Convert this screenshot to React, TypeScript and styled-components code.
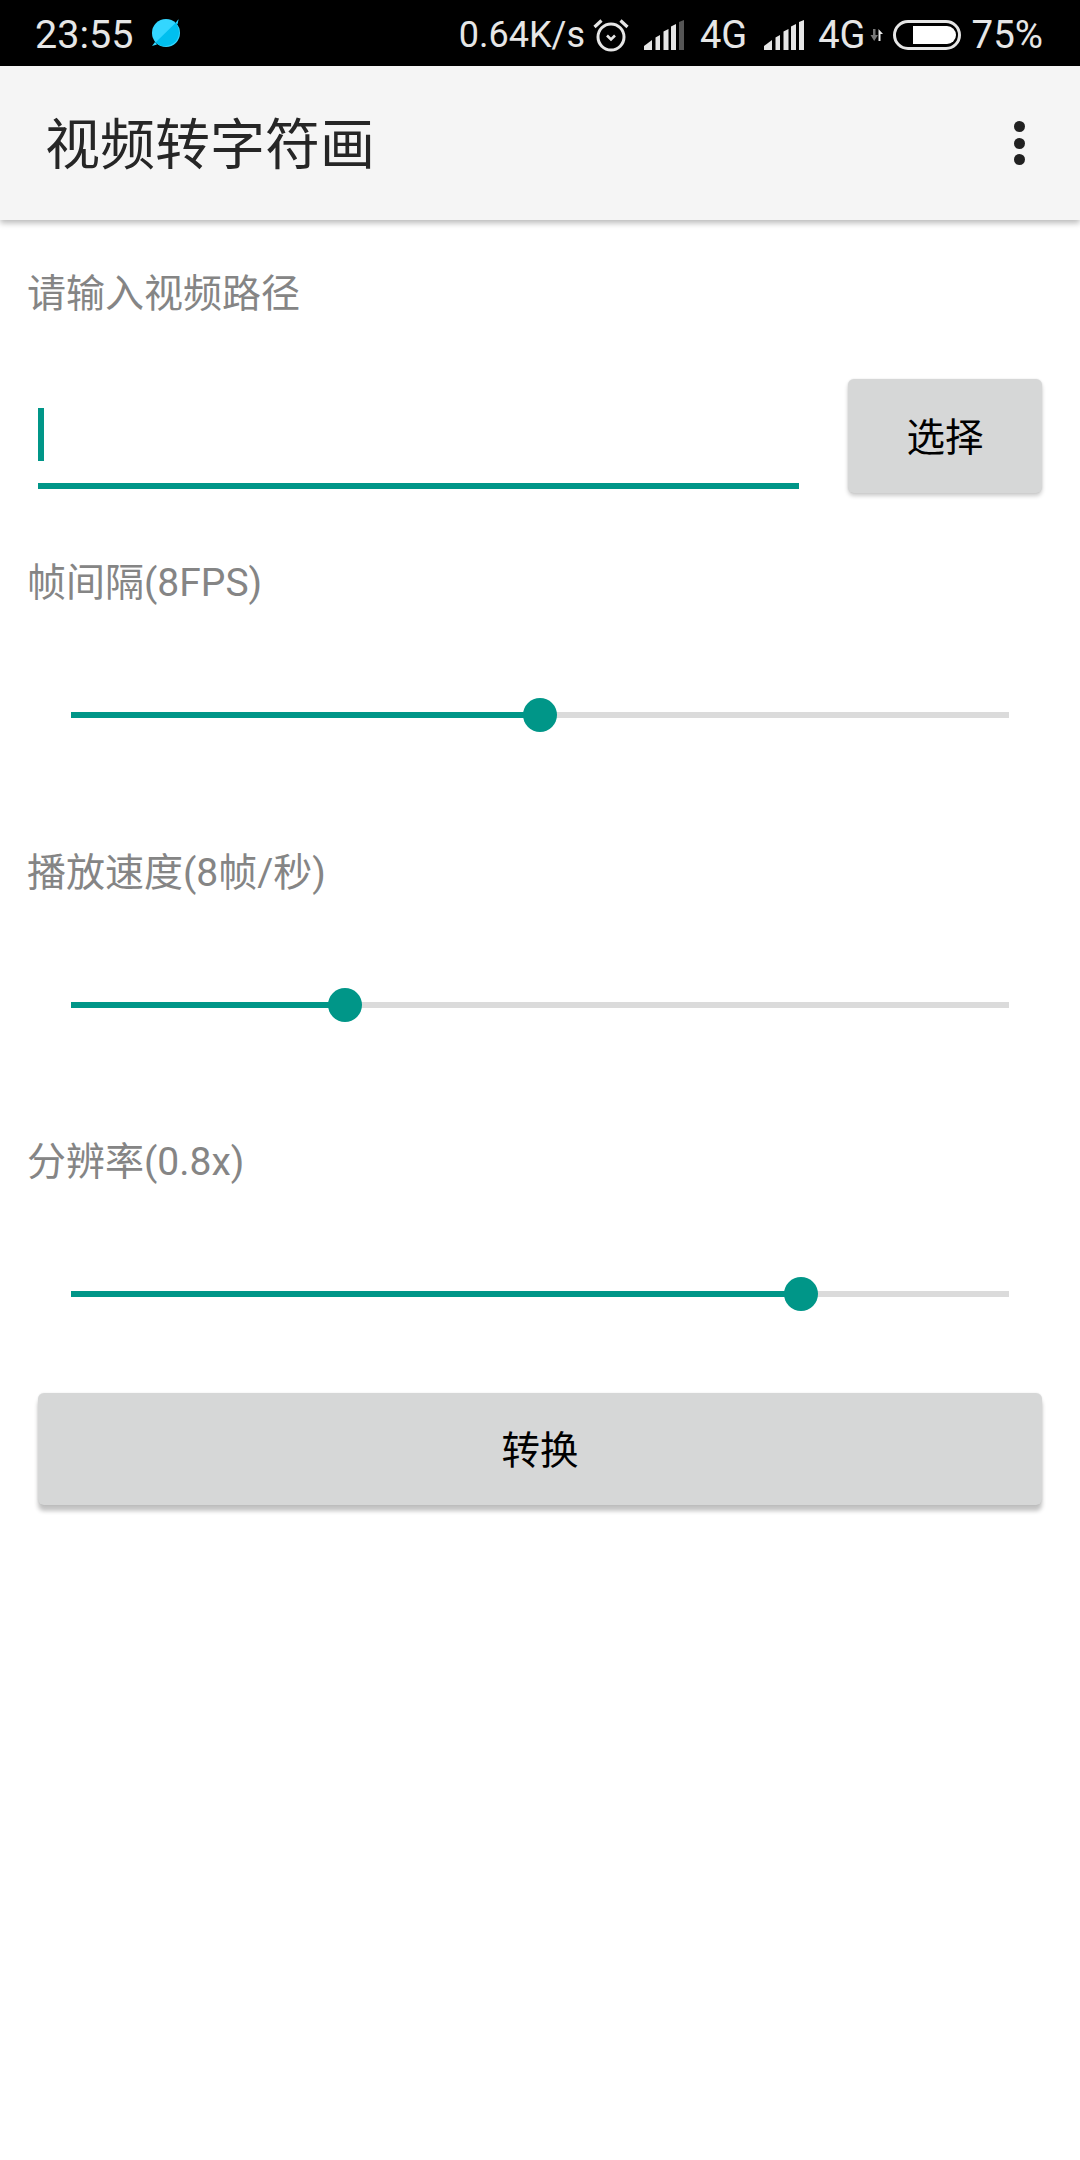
import React from 'react';
import styled, { createGlobalStyle } from 'styled-components';

const GlobalStyle = createGlobalStyle`
  html, body {
    margin: 0;
    padding: 0;
    background: #ffffff;
  }
  * {
    box-sizing: border-box;
  }
  body {
    font-family: Roboto, "Noto Sans CJK SC", sans-serif;
  }
`;

const Page = styled.div`
  width: 1080px;
  height: 2160px;
  background: #ffffff;
  overflow: hidden;
`;

const StatusBar = styled.div`
  height: 66px;
  background: #000000;
  color: #e6e6e6;
  display: flex;
  align-items: center;
  padding: 3px 37px 0 35px;
`;

const StatusText = styled.span<{ $size?: number; $left?: number }>`
  font-size: ${p => p.$size ?? 38}px;
  line-height: 44px;
  margin-left: ${p => p.$left ?? 0}px;
  white-space: nowrap;
`;

const StatusIcon = styled.svg<{ $left: number }>`
  display: block;
  flex: none;
  margin-left: ${p => p.$left}px;
`;

const AppIcon = styled.svg`
  display: block;
  flex: none;
  margin: -3px 0 0 18px;
`;

const StatusRight = styled.div`
  margin-left: auto;
  display: flex;
  align-items: center;
`;

const AppBar = styled.header`
  position: relative;
  height: 154px;
  background: #f5f5f5;
  display: flex;
  align-items: center;
  justify-content: space-between;
  padding: 0 55px 0 45px;
  box-shadow: 0 3px 6px rgba(0, 0, 0, 0.28);
`;

const Title = styled.h1`
  margin: 4px 0 0;
  font-size: 55px;
  font-weight: 400;
  line-height: 64px;
  color: #262626;
`;

const MoreMenu = styled.div`
  display: flex;
  flex-direction: column;
  gap: 5.5px;
`;

const MenuDot = styled.span`
  width: 11px;
  height: 11px;
  border-radius: 50%;
  background: #212121;
`;

const Content = styled.main`
  padding-top: 48px;
`;

const Label = styled.div`
  padding-left: 27px;
  font-size: 39px;
  line-height: 52px;
  color: #858585;
`;

const PathRow = styled.div`
  display: flex;
  align-items: flex-start;
  gap: 49px;
  margin: 59px 38px 64px;
`;

const PathField = styled.div`
  flex: 1;
  height: 110px;
  padding-top: 29px;
  border-bottom: 6px solid #009688;
`;

const Caret = styled.div`
  width: 6px;
  height: 53px;
  background: #009688;
`;

const RaisedButton = styled.button`
  border: 0;
  padding: 0 0 4px;
  border-radius: 6px;
  background: #d6d7d7;
  color: #000000;
  font-family: inherit;
  font-size: 38.5px;
  box-shadow: 0 3px 4px rgba(0, 0, 0, 0.2), 0 0 2px rgba(0, 0, 0, 0.1);
`;

const PickButton = styled(RaisedButton)`
  width: 194px;
  height: 114px;
`;

const ConvertButton = styled(RaisedButton)`
  display: block;
  width: 1004px;
  height: 112px;
  margin: 82px 38px 0;
  box-shadow: 0 6px 4px rgba(0, 0, 0, 0.24), 0 0 2px rgba(0, 0, 0, 0.1);
`;

const SliderSection = styled.section`
  margin-bottom: 114.7px;

  &:last-of-type {
    margin-bottom: 0;
  }
`;

const SliderBox = styled.div`
  position: relative;
  height: 34px;
  margin: 89px 71px 0;
  display: flex;
  align-items: center;
`;

const TrackFilled = styled.div`
  height: 6px;
  background: #009688;
`;

const TrackRest = styled.div`
  flex: 1;
  height: 6px;
  background: #dbdbdb;
`;

const Thumb = styled.div`
  position: absolute;
  top: 0;
  width: 34px;
  height: 34px;
  margin-left: -17px;
  border-radius: 50%;
  background: #009688;
`;

const Slider = ({ ratio }: { ratio: number }) => (
  <SliderBox>
    <TrackFilled style={{ width: `${ratio * 100}%` }} />
    <TrackRest />
    <Thumb style={{ left: `${ratio * 100}%` }} />
  </SliderBox>
);

const BUBBLE_ICON = (
  <AppIcon width="30" height="30" viewBox="0 0 30 30">
    <circle cx="15" cy="15" r="14" fill="#33d6ff" />
    <path d="M26 3.5 L27.5 2 L26 7 A14 14 0 0 1 4.5 24.5 Z" fill="#00bfef" />
    <path d="M25 4.5 L27.5 1 L26.5 6 Z" fill="#33d6ff" />
    <path d="M4 24 L1 28 L6 26.5 Z" fill="#33d6ff" />
  </AppIcon>
);

const AlarmIcon = () => (
  <StatusIcon $left={8} width="36" height="35" viewBox="0 0 36 35" fill="none" stroke="#e6e6e6">
    <circle cx="18" cy="20" r="13" strokeWidth="3" />
    <path d="M14 18.5 L18 22.5 L22 18.5" strokeWidth="2.6" />
    <path d="M1.5 10 L8.5 3.5 M34.5 10 L27.5 3.5" strokeWidth="3.2" />
  </StatusIcon>
);

const SignalIcon = ({ left, lastDim }: { left: number; lastDim?: boolean }) => (
  <StatusIcon $left={left} width="40" height="30" viewBox="0 0 40 30" fill="#e6e6e6">
    <path d="M0 30 V26 L8 20 V30 Z" />
    <path d="M11.5 30 V17.5 L16 15 V30 Z" />
    <path d="M19.5 30 V11.5 L24.5 9 V30 Z" />
    <path d="M27 30 V6.5 L32 4 V30 Z" />
    <path d="M35 30 V2 L40 0 V30 Z" fill={lastDim ? '#555555' : '#e6e6e6'} />
  </StatusIcon>
);

const TrafficArrows = () => (
  <StatusIcon $left={4} width="13" height="12" viewBox="0 0 13 12">
    <path d="M3 0 H5.5 V6 H8 L4.2 12 L0.5 6 H3 Z" fill="#777777" />
    <path d="M8.5 12 V0 L13 5 H10.5 V12 Z" fill="#e6e6e6" />
  </StatusIcon>
);

const BatteryIcon = () => (
  <StatusIcon $left={10} width="68" height="30" viewBox="0 0 68 30">
    <rect x="1.5" y="1.5" width="65" height="27" rx="13.5" fill="none" stroke="#e6e6e6" strokeWidth="3" />
    <path d="M20 6 H54 A9 9 0 0 1 54 24 H20 Z" fill="#ffffff" />
  </StatusIcon>
);

const sliders = [
  { label: '帧间隔(8FPS)', ratio: 0.5 },
  { label: '播放速度(8帧/秒)', ratio: 0.2926 },
  { label: '分辨率(0.8x)', ratio: 0.778 }
];

export default function App() {
  return (
    <Page lang="zh-CN">
      <GlobalStyle />
      <StatusBar>
        <StatusText $size={39.5}>23:55</StatusText>
        {BUBBLE_ICON}
        <StatusRight>
          <StatusText $size={36}>0.64K/s</StatusText>
          <AlarmIcon />
          <SignalIcon left={15} lastDim />
          <StatusText $left={16}>4G</StatusText>
          <SignalIcon left={17} />
          <StatusText $left={14}>4G</StatusText>
          <TrafficArrows />
          <BatteryIcon />
          <StatusText $left={11} $size={38.5}>75%</StatusText>
        </StatusRight>
      </StatusBar>
      <AppBar>
        <Title>视频转字符画</Title>
        <MoreMenu>
          <MenuDot />
          <MenuDot />
          <MenuDot />
        </MoreMenu>
      </AppBar>
      <Content>
        <Label>请输入视频路径</Label>
        <PathRow>
          <PathField>
            <Caret />
          </PathField>
          <PickButton>选择</PickButton>
        </PathRow>
        {sliders.map(item => (
          <SliderSection key={item.label}>
            <Label>{item.label}</Label>
            <Slider ratio={item.ratio} />
          </SliderSection>
        ))}
        <ConvertButton>转换</ConvertButton>
      </Content>
    </Page>
  );
}
